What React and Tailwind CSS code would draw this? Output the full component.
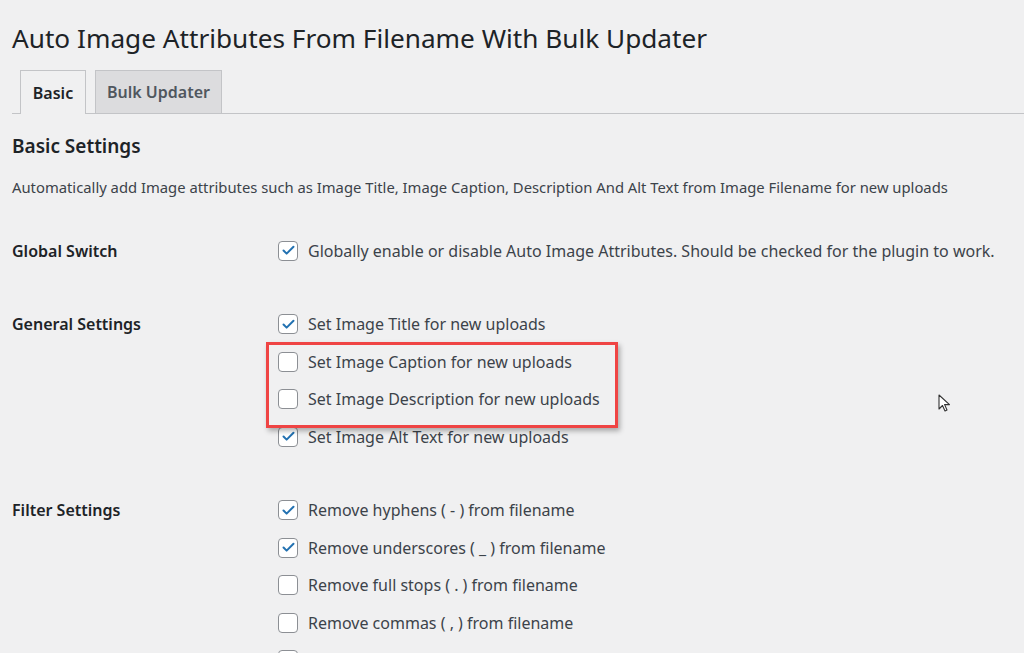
import { Check } from 'lucide-react'

const groups = [
  {
    label: 'Global Switch',
    items: [{ text: 'Globally enable or disable Auto Image Attributes. Should be checked for the plugin to work.', on: true }],
  },
  {
    label: 'General Settings',
    items: [
      { text: 'Set Image Title for new uploads', on: true },
      { text: 'Set Image Caption for new uploads', on: false },
      { text: 'Set Image Description for new uploads', on: false },
      { text: 'Set Image Alt Text for new uploads', on: true },
    ],
    highlight: true,
  },
  {
    label: 'Filter Settings',
    items: [
      { text: 'Remove hyphens ( - ) from filename', on: true },
      { text: 'Remove underscores ( _ ) from filename', on: true },
      { text: 'Remove full stops ( . ) from filename', on: false },
      { text: 'Remove commas ( , ) from filename', on: false },
      { text: 'Remove all numbers ( 0-9 ) from filename', on: false },
    ],
  },
]

function Box({ on }) {
  return (
    <span className="flex h-[20px] w-[20px] shrink-0 items-center justify-center rounded-[4px] border border-[#8c8f94] bg-white">
      {on && <Check size={15} strokeWidth={3.2} className="text-[#2271b1]" />}
    </span>
  )
}

function Item({ item }) {
  return (
    <div className="flex h-[37.5px] items-center gap-[10px] pl-[278px]">
      <Box on={item.on} />
      <span className="text-[16px] text-[#3c434a]">{item.text}</span>
    </div>
  )
}

export default function App() {
  return (
    <div className="relative h-[653px] w-[1024px] overflow-hidden bg-[#f0f0f1] font-['Noto_Sans',sans-serif]">
      <h1 className="pl-[12px] pt-[18px] text-[26.2px] leading-[40px] text-[#1d2327]">
        Auto Image Attributes From Filename With Bulk Updater
      </h1>

      {/* Tabs */}
      <div className="ml-[12px] mt-[12px] flex items-end gap-[9px] border-b border-[#c3c4c7] pl-[8px]">
        <div className="-mb-px flex h-[44px] w-[66px] items-center justify-center border border-b-0 border-[#c3c4c7] bg-[#f0f0f1] text-[16px] font-semibold text-[#1d2327]">
          Basic
        </div>
        <div className="flex h-[43px] w-[127px] items-center justify-center border border-b-0 border-[#c3c4c7] bg-[#dcdcde] text-[16px] font-semibold text-[#50575e]">
          Bulk Updater
        </div>
      </div>

      <div className="pl-[12px]">
        <h2 className="pt-[19px] text-[19px] font-semibold leading-[26px] text-[#1d2327]">Basic Settings</h2>
        <p className="mt-[18px] text-[14.8px] leading-[20px] text-[#3c434a]">
          Automatically add Image attributes such as Image Title, Image Caption, Description And Alt Text from Image Filename for new uploads
        </p>
      </div>

      <div className="mt-[17px]">
        {groups.map((g) => (
          <div key={g.label} className="relative py-[18px]">
            <div className="absolute left-[12px] top-[18px] flex h-[37.5px] items-center text-[16px] font-semibold text-[#1d2327]">
              {g.label}
            </div>
            {g.items.map((it) => (
              <Item key={it.text} item={it} />
            ))}
            {g.highlight && (
              <div className="pointer-events-none absolute left-[266px] top-[54px] h-[86px] w-[352px] border-[3px] border-[#ef4444] shadow-[2px_3px_5px_rgba(0,0,0,0.3)]" />
            )}
          </div>
        ))}
      </div>

      {/* cursor */}
      <svg className="absolute left-[938px] top-[394px]" width="14" height="20" viewBox="0 0 14 20">
        <path d="M1 1 L1 15 L4.5 11.5 L7 17 L9 16 L6.6 10.6 L11.5 10.6 Z" fill="white" stroke="#333" strokeWidth="1.1" strokeLinejoin="round" />
      </svg>
    </div>
  )
}
